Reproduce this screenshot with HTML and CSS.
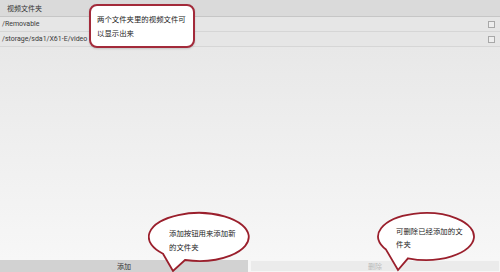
FILE: index.html
```html
<!DOCTYPE html>
<html lang="zh-CN">
<head>
<meta charset="utf-8">
<link rel="stylesheet" href="styles.css">
</head>
<body>
<div class="screen">
  <div class="header">视频文件夹</div>
  <div class="list">
    <div class="row"><span class="path">/Removable</span><span class="check"></span></div>
    <div class="row"><span class="path">/storage/sda1/X61-E/video</span><span class="check"></span></div>
  </div>
  <div class="fill"></div>
  <div class="buttons">
    <div class="btn btn-add">添加</div>
    <div class="btn btn-del">删除</div>
  </div>

  <div class="note note-top">两个文件夹里的视频文件可<br>以显示出来</div>

  <div class="bubble bubble-add">
    <svg class="bubble-shape" width="104" height="62" viewBox="0 0 104 62">
      <path d="M37 49 A50 24 0 1 0 15 42.7 L25 60 Z" />
    </svg>
    <div class="bubble-text">添加按钮用来添加新<br>的文件夹</div>
  </div>

  <div class="bubble bubble-del">
    <svg class="bubble-shape" width="104" height="62" viewBox="0 0 104 62">
      <path d="M32 47.3 A48 23.5 0 1 0 10 38.5 L22 59 Z" />
    </svg>
    <div class="bubble-text">可删除已经添加的文<br>件夹</div>
  </div>
</div>
</body>
</html>
```

FILE: styles.css
```css
html, body {
  margin: 0;
  padding: 0;
}
body {
  width: 500px;
  height: 272px;
  overflow: hidden;
  font-family: Roboto, "Noto Sans CJK SC", sans-serif;
}
.screen {
  position: relative;
  width: 500px;
  height: 272px;
  display: flex;
  flex-direction: column;
  background: #f4f4f4;
}
.header {
  height: 16px;
  line-height: 16px;
  padding-left: 7px;
  font-family: "Noto Sans CJK SC", sans-serif;
  font-size: 7px;
  color: #333;
  background: #dadada;
  border-bottom: 1px solid #c6c6c6;
}
.list {
  background: #e6e6e6;
}
.row {
  height: 14px;
  border-bottom: 1px solid #d6d6d6;
  display: flex;
  align-items: center;
  justify-content: space-between;
  padding: 0 5px 0 2px;
}
.path {
  font-family: Roboto, sans-serif;
  font-size: 7px;
  color: #3a3a3a;
}
.check {
  width: 5px;
  height: 5px;
  border: 1px solid #a8a8a8;
  background: #eeeeee;
}
.fill {
  flex: 1;
  background: linear-gradient(#e8e8e8, #f7f7f7);
}
.buttons {
  height: 12px;
  display: flex;
  gap: 2px;
  background: #f7f7f7;
}
.btn {
  flex: 1;
  display: flex;
  align-items: center;
  justify-content: center;
  font-family: "Noto Sans CJK SC", sans-serif;
  font-size: 7px;
}
.btn-add {
  background: #d2d2d2;
  color: #333;
}
.btn-del {
  background: #ebebeb;
  border: 1px solid #f6f6f6;
  color: #b8b8b8;
}
.note {
  position: absolute;
  left: 89px;
  top: 4px;
  width: 102px;
  height: 40px;
  box-sizing: content-box;
  border: 2px solid #a32a3a;
  border-radius: 8px;
  background: #fff;
  padding: 0;
  font-family: "Noto Sans CJK SC", sans-serif;
  font-size: 7.4px;
  line-height: 14px;
  color: #222;
  white-space: nowrap;
  box-shadow: 0 1px 2px rgba(0,0,0,0.15);
}
.note-top {
  padding: 0;
  text-indent: 0;
}
.note-top {
  box-sizing: border-box;
  width: 106px;
  height: 44px;
  padding: 6px 0 0 6px;
}
.bubble {
  position: absolute;
  width: 104px;
  height: 62px;
}
.bubble-add {
  left: 148px;
  top: 211px;
}
.bubble-del {
  left: 376px;
  top: 211px;
}
.bubble-shape {
  position: absolute;
  left: 0;
  top: 0;
}
.bubble-shape path {
  fill: #ffffff;
  stroke: #9a1f2c;
  stroke-width: 1.8;
  stroke-linejoin: miter;
}
.bubble-text {
  position: relative;
  font-family: "Noto Sans CJK SC", sans-serif;
  font-size: 7.4px;
  line-height: 13.5px;
  color: #222;
  white-space: nowrap;
}
.bubble-add .bubble-text {
  padding: 15px 0 0 21px;
}
.bubble-del .bubble-text {
  padding: 14px 0 0 20px;
  line-height: 12.5px;
}
```
